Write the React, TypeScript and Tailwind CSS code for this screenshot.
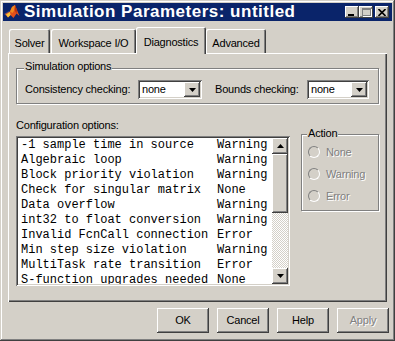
import React from 'react';

const raised = 'bg-[#d4d0c8] shadow-[inset_-1px_-1px_#404040,inset_1px_1px_#ffffff,inset_-2px_-2px_#808080]';
const sunken = 'shadow-[inset_1px_1px_#808080,inset_-1px_-1px_#ffffff,inset_2px_2px_#404040,inset_-2px_-2px_#d4d0c8]';
const etched = 'border border-[#808080] shadow-[inset_1px_1px_#ffffff,1px_1px_#ffffff]';
const disabledText = 'text-[#808080] [text-shadow:1px_1px_0_#ffffff]';

const rows: [string, string][] = [
  ['-1 sample time in source', 'Warning'],
  ['Algebraic loop', 'Warning'],
  ['Block priority violation', 'Warning'],
  ['Check for singular matrix', 'None'],
  ['Data overflow', 'Warning'],
  ['int32 to float conversion', 'Warning'],
  ['Invalid FcnCall connection', 'Error'],
  ['Min step size violation', 'Warning'],
  ['MultiTask rate transition', 'Error'],
  ['S-function upgrades needed', 'None'],
];

function Arrow({ up }: { up?: boolean }) {
  return (
    <svg width="7" height="4" viewBox="0 0 7 4">
      <path d={up ? 'M3.5 0 L7 4 L0 4 Z' : 'M0 0 L7 0 L3.5 4 Z'} fill="#000" />
    </svg>
  );
}

function Combo({ width }: { width: string }) {
  return (
    <div className={`${width} h-[19px] bg-white ${sunken} flex items-stretch p-[2px]`}>
      <span className="flex-1 pl-[2px] leading-[15px] text-[11px] text-black">none</span>
      <span className={`w-[16px] ${raised} flex items-center justify-center`}>
        <Arrow />
      </span>
    </div>
  );
}

function Radio({ label }: { label: string }) {
  return (
    <div className="flex items-center h-[22px]">
      <span className="w-[12px] h-[12px] rounded-full border border-t-[#808080] border-l-[#808080] border-b-white border-r-white bg-[#d4d0c8]" />
      <span className={`ml-[6px] text-[11px] leading-[13px] ${disabledText}`}>{label}</span>
    </div>
  );
}

function Tab({ label, width, selected, className = '' }: { label: string; width: string; selected?: boolean; className?: string }) {
  return (
    <div
      className={`${width} ${className} ${
        selected
          ? 'h-[27px] pt-[9px] mb-[-1px] relative z-10'
          : 'h-[24px] pt-[8px]'
      } bg-[#d4d0c8] rounded-t-[2px] shadow-[inset_1px_1px_#ffffff,inset_-1px_0_#404040,inset_-2px_0_#808080] text-center text-[11px] leading-[13px] text-black`}
    >
      {label}
    </div>
  );
}

function WinButton({ children, className = '' }: { children: React.ReactNode; className?: string }) {
  return (
    <div className={`w-[14px] h-[12px] ${raised} flex items-center justify-center ${className}`}>{children}</div>
  );
}

function MatlabIcon() {
  return (
    <svg width="16" height="16" viewBox="0 0 16 16">
      <path d="M0 10 L5 7 L7 9 L4 13 Z" fill="#3a4a8a" />
      <path d="M1 10 L6 7.5 L8 3 L11 1 L13 6 L15.5 12 L12.5 9.5 L9.5 14 L6.5 11 L4 13.5 Z" fill="#e2501a" />
      <path d="M8 3 L11 1 L10.5 6 L8.5 9 L6 7.5 Z" fill="#f28a1e" />
      <path d="M2 10.5 L6 8 L6.5 11 L4 13.5 Z" fill="#f7c43a" />
      <path d="M11 1 L13 6 L12.5 9.5 L10.5 6 Z" fill="#b8300f" />
    </svg>
  );
}

export default function App() {
  return (
    <div className="w-[395px] h-[341px] bg-[#d4d0c8] p-[3px] flex flex-col shadow-[inset_-1px_-1px_#404040,inset_1px_1px_#d4d0c8,inset_-2px_-2px_#808080,inset_2px_2px_#ffffff] font-['Liberation_Sans',Arial,sans-serif] tracking-[-0.2px] overflow-hidden">
      {/* Title bar */}
      <div className="h-[18px] bg-[#0a246a] flex items-center">
        <span className="ml-[1px]">
          <MatlabIcon />
        </span>
        <span className="ml-[4px] text-white font-bold text-[17px] tracking-[0.5px] leading-[18px] whitespace-nowrap">
          Simulation Parameters: untitled
        </span>
        <div className="ml-auto mr-[3px] flex items-center">
          <WinButton>
            <span className="w-[6px] h-[2px] bg-black mt-[6px] mr-[3px]" />
          </WinButton>
          <WinButton>
            <span className="w-[9px] h-[8px] border border-t-2 border-[#808080] [box-shadow:1px_1px_0_#ffffff]" />
          </WinButton>
          <WinButton className="ml-[2px]">
            <svg width="8" height="7" viewBox="0 0 8 7">
              <path d="M0.5 0 L7.5 7 M7.5 0 L0.5 7" stroke="#000" strokeWidth="1.6" />
            </svg>
          </WinButton>
        </div>
      </div>

      {/* Tabs + panel */}
      <div className="px-[5px]">
        <div className="flex items-end h-[32px] pl-[1px]">
          <Tab label="Solver" width="w-[41px]" />
          <Tab label="Workspace I/O" width="w-[85px]" className="ml-[1px]" />
          <Tab label="Diagnostics" width="w-[70px]" selected />
          <Tab label="Advanced" width="w-[60px]" />
        </div>
        <div className="h-[249px] bg-[#d4d0c8] shadow-[inset_1px_1px_#ffffff,inset_-1px_-1px_#404040,inset_-2px_-2px_#808080] pt-[15px] px-[8px] text-[11px] leading-[13px] text-black">
          {/* Simulation options */}
          <div className={`relative h-[36px] w-[363px] ${etched}`}>
            <span className="absolute left-[7px] -top-[9px] px-[1px] bg-[#d4d0c8]">Simulation options</span>
            <div className="flex items-center pt-[11px] pl-[8px]">
              <span className="w-[113px] whitespace-nowrap">Consistency checking:</span>
              <Combo width="w-[64px]" />
              <span className="ml-[13px] w-[92px] whitespace-nowrap">Bounds checking:</span>
              <Combo width="w-[62px]" />
            </div>
          </div>

          <div className="mt-[15px]">Configuration options:</div>

          <div className="mt-[2px] flex items-start">
            {/* List box */}
            <div className={`mt-[2px] w-[274px] h-[150px] bg-white ${sunken} p-[2px] flex`}>
              <div className="flex-1 overflow-hidden pl-[3px] font-['Liberation_Mono','Courier_New',monospace] text-[12px] leading-[15px] tracking-normal">
                {rows.map(([name, level]) => (
                  <div key={name} className="grid grid-cols-[196px_1fr] whitespace-pre">
                    <span>{name}</span>
                    <span>{level}</span>
                  </div>
                ))}
              </div>
              <div className="w-[16px] flex flex-col">
                <div className={`h-[16px] ${raised} flex items-center justify-center`}>
                  <Arrow up />
                </div>
                <div className={`h-[59px] ${raised}`} />
                <div className="flex-1 bg-[image:repeating-conic-gradient(#d4d0c8_0%_25%,#ffffff_0%_50%)] bg-[length:2px_2px]" />
                <div className={`h-[16px] ${raised} flex items-center justify-center`}>
                  <Arrow />
                </div>
              </div>
            </div>

            {/* Action group */}
            <div className={`relative ml-[11px] w-[78px] h-[77px] ${etched}`}>
              <span className="absolute left-[5px] -top-[8px] px-[1px] bg-[#d4d0c8]">Action</span>
              <div className="pt-[6px] pl-[6px] flex flex-col">
                <Radio label="None" />
                <Radio label="Warning" />
                <Radio label="Error" />
              </div>
            </div>
          </div>
        </div>
      </div>

      {/* Buttons */}
      <div className="mt-[6px] pr-[3px] flex justify-end gap-[8px] text-[11px] leading-[13px]">
        {['OK', 'Cancel', 'Help'].map((b) => (
          <div key={b} className={`w-[52px] h-[25px] ${raised} flex items-center justify-center text-black`}>
            {b}
          </div>
        ))}
        <div className={`w-[52px] h-[25px] ${raised} flex items-center justify-center ${disabledText}`}>Apply</div>
      </div>
    </div>
  );
}
